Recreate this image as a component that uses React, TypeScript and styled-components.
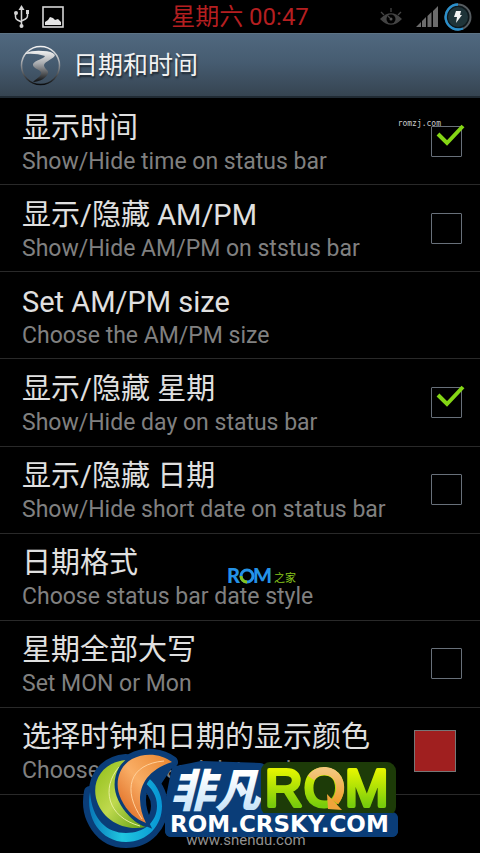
import React from "react";
import styled, { createGlobalStyle } from "styled-components";

const Global = createGlobalStyle`
  * { box-sizing: border-box; }
  body { margin: 0; background: #000; font-family: Roboto, "Noto Sans CJK SC", sans-serif; }
`;

const Page = styled.main`
  position: relative;
  min-height: 100vh;
  display: flex;
  flex-direction: column;
  background: #000;
  overflow: hidden;
`;

const StatusBar = styled.div`
  height: 33px;
  display: grid;
  grid-template-columns: 1fr auto 1fr;
  align-items: center;
  padding: 0 8px;
`;

const StatusIcons = styled.div<{ $end?: boolean }>`
  display: flex;
  align-items: center;
  gap: ${(p) => (p.$end ? 6 : 12)}px;
  padding-left: 4px;
  justify-content: ${(p) => (p.$end ? "flex-end" : "flex-start")};
`;

const EyeIcon = styled.svg`
  margin-right: 8px;
`;

const Clock = styled.time`
  color: #b51f20;
  font-size: 24px;
  line-height: 32px;
`;

const Header = styled.header`
  height: 65px;
  display: flex;
  align-items: center;
  gap: 12px;
  padding: 0 20px;
  background: linear-gradient(#50687f, #465c71 45%, #364451);
  border-top: 1px solid #5d7385;
  border-bottom: 2px solid #202a33;
`;

const Title = styled.h1`
  margin: 0;
  padding-top: 1px;
  color: #f2f2f2;
  font-size: 25px;
  line-height: 36px;
  font-weight: 400;
  text-shadow: 1px 2px 2px #1c252e;
`;

const List = styled.div`
  flex: 1;
  display: grid;
  grid-auto-rows: 1fr;
`;

const Row = styled.label`
  min-height: 87px;
  display: flex;
  align-items: center;
  justify-content: space-between;
  padding: 0 18px 0 22px;
  border-bottom: 1px solid #292929;
`;

const Texts = styled.span`
  display: flex;
  flex-direction: column;
  padding-top: 3px;
  white-space: nowrap;
`;

const Name = styled.span`
  color: #e0e0e0;
  font-size: 29px;
  line-height: 38px;
`;

const Summary = styled.span`
  color: #808080;
  font-size: 23px;
  line-height: 30px;
`;

const Tick = styled.span`
  position: relative;
  display: block;
  width: 31px;
  height: 31px;
`;

const TickInput = styled.input`
  appearance: none;
  display: block;
  width: 31px;
  height: 31px;
  margin: 0;
  border: 1px solid #68707a;
  border-radius: 1px;
  background: #000;
`;

const TickMark = styled.svg`
  position: absolute;
  left: 4px;
  top: -2px;
  pointer-events: none;
`;

const Swatch = styled.button`
  width: 42px;
  height: 42px;
  margin-right: 6px;
  padding: 0;
  border: 1px solid #777;
  background: #a01f1f;
`;

const Footer = styled.footer`
  height: 58px;
  display: flex;
  align-items: flex-end;
  justify-content: center;
  padding: 0 0 4px 12px;
  color: #909090;
  font-size: 15px;
  line-height: 18px;
`;

const SiteMark = styled.span`
  position: absolute;
  top: 118px;
  right: 39px;
  color: #ccc;
  font: 8px/12px "DejaVu Sans Mono", monospace;
`;

const HomeMark = styled.svg`
  position: absolute;
  left: 227px;
  top: 562px;
`;

const Brand = styled.svg`
  position: absolute;
  left: 78px;
  bottom: 0;
`;

type Item = { name: string; summary: string; checked?: boolean; swatch?: boolean };

const items: Item[] = [
  { name: "显示时间", summary: "Show/Hide time on status bar", checked: true },
  { name: "显示/隐藏 AM/PM", summary: "Show/Hide AM/PM on ststus bar", checked: false },
  { name: "Set AM/PM size", summary: "Choose the AM/PM size" },
  { name: "显示/隐藏 星期", summary: "Show/Hide day on status bar", checked: true },
  { name: "显示/隐藏 日期", summary: "Show/Hide short date on status bar", checked: false },
  { name: "日期格式", summary: "Choose status bar date style" },
  { name: "星期全部大写", summary: "Set MON or Mon", checked: false },
  { name: "选择时钟和日期的显示颜色", summary: "Choose clock and date color", swatch: true },
];

function CheckBox({ on }: { on: boolean }) {
  const [value, setValue] = React.useState(on);
  return (
    <Tick>
      <TickInput type="checkbox" checked={value} onChange={() => setValue(!value)} />
      {value && (
        <TickMark width="32" height="24" viewBox="0 0 32 24" fill="none" stroke="#84d615" strokeWidth="4">
          <path d="M3 10L12 19L28 2" />
        </TickMark>
      )}
    </Tick>
  );
}

const Usb = () => (
  <svg width="18" height="24" viewBox="0 0 18 24" fill="none" stroke="#d5d5d5" strokeWidth="1.5">
    <path d="M9.5 4V20M3.5 9v3q0 2 2 3l4 2M15.5 9v2q0 2-2 3l-4 2" />
    <path d="M9.5 0l3 5h-6z" fill="#d5d5d5" stroke="none" />
    <circle cx="9.5" cy="21" r="2" fill="#d5d5d5" stroke="none" />
    <circle cx="4" cy="8" r="2" fill="#d5d5d5" stroke="none" />
    <path d="M14 5h3v4h-3z" fill="#d5d5d5" stroke="none" />
  </svg>
);

const Picture = () => (
  <svg width="22" height="22" viewBox="0 0 22 22">
    <rect x="1" y="1" width="20" height="20" fill="none" stroke="#d5d5d5" strokeWidth="1.6" />
    <path d="M3 19v-3l3-2 2-3 3 1 2 2 3-1 3 3v3z" fill="#e4e4e4" />
  </svg>
);

const Eye = () => (
  <EyeIcon width="22" height="18" viewBox="0 0 22 18" fill="none" stroke="#444" strokeWidth="1.3">
    <path d="M1 11Q11 1 21 11Q11 21 1 11z" fill="#444" />
    <circle cx="11" cy="11" r="4.5" fill="#000" stroke="none" />
    <circle cx="11" cy="11" r="1.5" fill="#555" stroke="none" />
    <path d="M10 10L8 8M11 0v4M1 4l3 3M21 4l-3 3" />
  </EyeIcon>
);

const Signal = () => (
  <svg width="22" height="22" viewBox="0 0 22 22" fill="#6c6c6c">
    <path d="M0 21l5-5v5zM6 21v-6l4-4v10zM11.500 21V10l4-4v15zM17 21V5l5-5v21z" />
  </svg>
);

const Battery = () => (
  <svg width="28" height="28" viewBox="0 0 28 28" fill="none">
    <circle cx="14" cy="14" r="11" fill="#1f3439" stroke="#0d171b" strokeWidth="2" />
    <circle cx="14" cy="14" r="12.5" stroke="#565c60" strokeWidth="2" />
    <path d="M14 1.5A12.5 12.5 0 1 0 19 25.500" stroke="#2a8fcb" strokeWidth="2.4" />
    <path d="M12 8h5l-1 4h2l-6 8 1-6h-3z" fill="#f4f4f4" />
  </svg>
);

const AppIcon = () => (
  <svg width="41" height="41" viewBox="0 0 41 41" fill="none">
    <defs>
      <linearGradient id="road" x2="0" y2="1">
        <stop stopColor="#f2f2f2" />
        <stop offset=".4" stopColor="#a9acb0" />
        <stop offset="1" stopColor="#0c0e10" />
      </linearGradient>
    </defs>
    <circle cx="20.500" cy="20.500" r="19" stroke="url(#road)" strokeWidth="1.5" />
    <path
      d="M5 8Q14 5 23 6Q32 6 35 10C34 14 25 16 24 20C24 24 29 25 28 28C27 33 19 37 13 37C18 32 22 31 21 27C19 24 12 23 13 19C15 15 24 14 25 11Q16 8 5 9z"
      fill="url(#road)"
    />
  </svg>
);

const HomeLogo = () => (
  <HomeMark width="72" height="28" viewBox="0 0 72 28">
    <g fontFamily="Lato, sans-serif" fontWeight="900" fontSize="20" fill="#2492e6">
      <text x="0" y="21">R</text>
      <text x="26" y="21">M</text>
    </g>
    <circle cx="20" cy="14" r="6" fill="none" stroke="#2492e6" strokeWidth="3" />
    <path d="M14 14A6 6 0 0 0 20 20" fill="none" stroke="#86c51b" strokeWidth="3" />
    <text x="47" y="20" fontFamily="Noto Sans CJK SC, sans-serif" fontSize="11" fill="#86c51b">之家</text>
  </HomeMark>
);

const green = "M48 15C25 17 14 35 18 53C23 74 45 87 68 82C49 76 29 48 48 15z";
const orange = "M94 17C84 9 67 7 54 14C40 22 36 39 43 54C49 67 58 74 68 78C58 58 57 29 94 17z";
const ring = "M12 47C7 73 23 97 48 97C70 97 84 80 84 61C84 48 77 37 68 31L65 36C74 43 79 51 79 61C79 77 66 88 48 88C29 88 14 75 12 47z";

const BrandLogo = () => (
  <Brand width="330" height="108" viewBox="0 0 330 108">
    <defs>
      <linearGradient id="lime" x2="1" y2="1">
        <stop stopColor="#8fbd16" />
        <stop offset=".5" stopColor="#bfd94e" />
        <stop offset="1" stopColor="#5f9e13" />
      </linearGradient>
      <linearGradient id="amber" x1="1" x2="0" y2="1">
        <stop stopColor="#e9842c" />
        <stop offset=".5" stopColor="#f9ae66" />
        <stop offset="1" stopColor="#d85b13" />
      </linearGradient>
      <linearGradient id="aqua" x2="1">
        <stop stopColor="#0876b8" />
        <stop offset=".45" stopColor="#20c6df" />
        <stop offset="1" stopColor="#0795d4" />
      </linearGradient>
      <linearGradient id="ice" x2="0" y2="1">
        <stop offset=".3" stopColor="#fff" />
        <stop offset="1" stopColor="#b7dcf7" />
      </linearGradient>
      <linearGradient id="leaf" x2="0" y2="1">
        <stop offset=".2" stopColor="#e2f500" />
        <stop offset=".8" stopColor="#78cc0c" />
      </linearGradient>
      <linearGradient id="gold" x2="0" y2="1">
        <stop stopColor="#f3c67c" />
        <stop offset="1" stopColor="#f09f2c" />
      </linearGradient>
    </defs>
    <g fill="#0a3d78" stroke="#0a3d78" strokeWidth="12" strokeLinejoin="round">
      <path d={ring} />
      <path d={green} />
      <path d={orange} />
      <path d="M90 18L66 32L78 36z" />
      <rect x="93" y="73" width="221" height="13" />
      <path d="M99 27L124 22L182 24V70H93V58z" />
    </g>
    <path d={ring} fill="url(#aqua)" />
    <path d={green} fill="url(#lime)" />
    <path d="M41 22C23 43 29 72 62 81" fill="none" stroke="#e7ef9c" />
    <path d={orange} fill="url(#amber)" stroke="#0a3d78" strokeWidth="6" paintOrder="stroke" />
    <path d="M86 16C51 19 44 45 64 74" fill="none" stroke="#ffd09a" />
    <text
      x="92" y="62" fontFamily="Noto Sans CJK SC, sans-serif" fontSize="45" fontWeight="900" fontStyle="italic"
      fill="url(#ice)" stroke="#0a3d78" strokeWidth="10" strokeLinejoin="round" paintOrder="stroke"
    >
      非凡
    </text>
    <rect x="183" y="17" width="135" height="54" rx="9" fill="#1d3b08" />
    <text
      x="187 226 267" y="61" fontFamily="Liberation Sans, sans-serif" fontSize="52"
      fill="url(#leaf)" stroke="url(#leaf)" strokeWidth="4" strokeLinejoin="round"
    >
      ROM
    </text>
    <path d="M233 33C241 22 255 25 260 34C264 42 262 50 257 57" fill="none" stroke="url(#gold)" strokeWidth="8" />
    <path d="M249 49L264 65L250 64z" fill="#f0a43a" />
    <rect x="87" y="68" width="233" height="24" rx="6" fill="#0a3d78" />
    <text x="92" y="87" fontFamily="DejaVu Sans, sans-serif" fontSize="23" fontWeight="700" fill="#fff">
      ROM.CRSKY.COM
    </text>
  </Brand>
);

export default function App() {
  return (
    <>
      <Global />
      <Page>
        <StatusBar>
          <StatusIcons>
            <Usb />
            <Picture />
          </StatusIcons>
          <Clock>星期六 00:47</Clock>
          <StatusIcons $end>
            <Eye />
            <Signal />
            <Battery />
          </StatusIcons>
        </StatusBar>
        <Header>
          <AppIcon />
          <Title>日期和时间</Title>
        </Header>
        <List>
          {items.map((it) => (
            <Row key={it.name} as={it.checked === undefined ? "div" : "label"}>
              <Texts>
                <Name>{it.name}</Name>
                <Summary>{it.summary}</Summary>
              </Texts>
              {it.checked !== undefined && <CheckBox on={it.checked} />}
              {it.swatch && <Swatch aria-label={it.name} />}
            </Row>
          ))}
        </List>
        <Footer>www.shendu.com</Footer>
        <SiteMark>romzj.com</SiteMark>
        <HomeLogo />
        <BrandLogo />
      </Page>
    </>
  );
}
